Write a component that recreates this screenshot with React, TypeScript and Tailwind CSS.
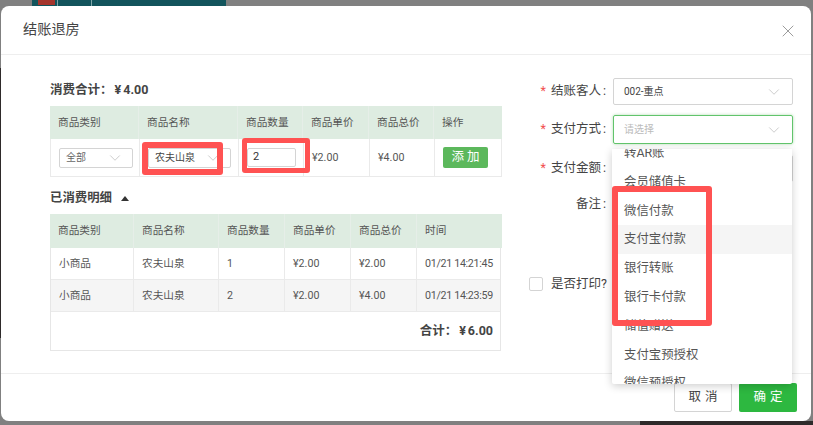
import React from 'react';
import { ChevronDown, X } from 'lucide-react';

const cjk = { fontFamily: 'Roboto, "Noto Sans CJK SC", sans-serif' };

const headCols1 = 'grid grid-cols-[89px_99px_65px_66px_65px_68px]';
const bodyCols1 = 'grid grid-cols-[89px_99px_65px_66px_65px_66px]';
const headCols2 = 'grid grid-cols-[84px_85px_66px_66px_66px_85px]';
const bodyCols2 = 'grid grid-cols-[83px_85px_66px_66px_66px_83px]';

const HeadCell = ({ children }: { children: React.ReactNode }) => (
  <div className="flex items-center border-r border-[#e6eee8] pl-2 text-[10.67px] text-[#555] last:border-r-0">{children}</div>
);

const Cell = ({ children }: { children?: React.ReactNode }) => (
  <div className="flex items-center border-r border-[#eaeaea] pl-2 text-[10.67px] text-[#555] last:border-r-0">{children}</div>
);

const SelectBox = ({ children, className }: { children: React.ReactNode; className: string }) => (
  <div className={`flex items-center justify-between rounded-[2px] border border-[#d4d4d4] bg-white ${className}`}>
    {children}
  </div>
);

const Chevron = () => <ChevronDown className="h-[18px] w-[18px] text-[#bbb]" strokeWidth={1} />;

const FormRow = ({ label, children }: { label: string; children?: React.ReactNode }) => (
  <div className="flex items-center">
    <div className="w-[84px] pr-[7px] text-right text-[12.5px] text-[#444]">
      <span className="mr-[5px] text-[#f25050]">*</span>
      {label}
      <span className="ml-[2px]">:</span>
    </div>
    {children}
  </div>
);

const Money = ({ label, value }: { label: string; value: string }) => (
  <span className="flex items-center text-[12.5px] font-bold text-[#444]">
    {label}：
    <span className="ml-[2px] mr-[2px]">¥</span>
    {value}
  </span>
);

const rows = [
  { qty: '1', price: '¥2.00', total: '¥2.00', time: '01/21 14:21:45', bg: 'bg-white' },
  { qty: '2', price: '¥2.00', total: '¥4.00', time: '01/21 14:23:59', bg: 'bg-[#f5f5f5]' },
];

const payItems = ['转AR账', '会员储值卡', '微信付款', '支付宝付款', '银行转账', '银行卡付款', '储值赠送', '支付宝预授权', '微信预授权'];

export default function App() {
  return (
    <div className="relative h-[425px] w-[813px] overflow-hidden bg-[#808080] pl-px pt-[6px]" style={cjk}>
      {/* what shows behind the dialog */}
      <div className="absolute left-[32px] top-0 h-[6px] w-[194px] bg-[#12545c]" />
      <div className="absolute left-[38px] top-0 h-[5px] w-[17px] bg-[#a5352c]" />
      <div className="absolute left-[57px] top-0 h-[6px] w-[35px] border-x border-[#7fa5a8]" />
      <div className="absolute bottom-0 left-[640px] h-[4px] w-[173px] bg-[#2e2a2a]" />
      <div className="absolute left-0 top-[68px] h-[270px] w-px bg-[#2e2a2a]" />

      <div className="relative flex h-[415px] w-[810px] flex-col rounded-[8px] bg-white">
        <div className="flex h-[49px] shrink-0 items-center justify-between border-b border-[#eeeeee] pl-[22px] pr-[13px]">
          <span className="text-[14.2px] text-[#444]">结账退房</span>
          <X className="mt-[2px] h-[20px] w-[20px] text-[#888]" strokeWidth={1} />
        </div>

        <div className="flex h-[318px] shrink-0">
          <div className="ml-[49px] w-[452px] shrink-0 pt-[24px]">
            <div className="h-[27px] pt-[2px] leading-[17px]">
              <Money label="消费合计" value="4.00" />
            </div>
            <div className={`${headCols1} h-[33px] bg-[#deece1]`}>
              {['商品类别', '商品名称', '商品数量', '商品单价', '商品总价', '操作'].map((h) => (
                <HeadCell key={h}>{h}</HeadCell>
              ))}
            </div>
            <div className={`${bodyCols1} h-[38px] border-x border-b border-[#eaeaea]`}>
              <Cell>
                <SelectBox className="h-[20px] w-[74px] pl-[6px] pr-[8px] text-[10px] text-[#666]">
                  全部
                  <Chevron />
                </SelectBox>
              </Cell>
              <Cell>
                <SelectBox className="h-[20px] w-[83px] shrink-0 pl-[6px] pr-[8px] text-[10px] text-[#444]">
                  农夫山泉
                  <Chevron />
                </SelectBox>
              </Cell>
              <Cell>
                <div className="flex h-[19px] w-[49px] items-center rounded-[2px] border border-[#d4d4d4] pl-[5px] text-[11px] text-[#333]">2</div>
              </Cell>
              <Cell>¥2.00</Cell>
              <Cell>¥4.00</Cell>
              <Cell>
                <div className="flex h-[21px] w-[45px] items-center justify-center rounded-[2px] bg-[#5cb85c] pl-[3px] text-[12.5px] tracking-[3px] text-white">添加</div>
              </Cell>
            </div>

            <div className="flex h-[37px] items-center gap-[9px] pt-[6px] text-[12.4px] font-bold text-[#444]">
              已消费明细
              <span className="h-0 w-0 border-x-[4.5px] border-b-[5px] border-x-transparent border-b-[#333]" />
            </div>

            <div className={`${headCols2} h-[34px] bg-[#deece1]`}>
              {['商品类别', '商品名称', '商品数量', '商品单价', '商品总价', '时间'].map((h) => (
                <HeadCell key={h}>{h}</HeadCell>
              ))}
            </div>
            <div className="w-[451px] border-x border-b border-[#e6e6e6]">
              {rows.map((r) => (
                <div key={r.time} className={`${bodyCols2} h-[32px] border-b border-[#eaeaea] ${r.bg}`}>
                  <Cell>小商品</Cell>
                  <Cell>农夫山泉</Cell>
                  <Cell>{r.qty}</Cell>
                  <Cell>{r.price}</Cell>
                  <Cell>{r.total}</Cell>
                  <Cell>
                    <span className="tracking-[-0.3px]">{r.time}</span>
                  </Cell>
                </div>
              ))}
              <div className="flex h-[38px] items-center justify-end pr-[7px]">
                <Money label="合计" value="6.00" />
              </div>
            </div>
          </div>

          <div className="ml-[27px] flex w-[264px] shrink-0 flex-col pt-[23px]">
            <FormRow label="结账客人">
              <SelectBox className="h-[27px] w-[180px] pl-[10px] pr-[9px] text-[10px] text-[#444]">
                002-重点
                <Chevron />
              </SelectBox>
            </FormRow>
            <div className="mt-[10px]">
              <FormRow label="支付方式">
                <div className="flex h-[29px] w-[180px] items-center justify-between rounded-[2px] border border-[#62c46c] pl-[10px] pr-[9px] text-[10px] text-[#bbb] shadow-[0_0_3px_rgba(92,184,92,0.5)]">
                  请选择
                  <Chevron />
                </div>
              </FormRow>
            </div>
            <div className="mt-[11px]">
              <FormRow label="支付金额">
                <div className="h-[27px] w-[180px] rounded-[2px] border border-[#d4d4d4]" />
              </FormRow>
            </div>
            <div className="mt-[9px] flex h-[27px] w-[77px] items-center justify-end text-[12.5px] text-[#444]">
              备注<span className="ml-[2px]">:</span>
            </div>
            <div className="mt-[57px] flex items-center gap-[8px] text-[12.5px] text-[#444]">
              <span className="h-[14px] w-[14px] rounded-[2px] border border-[#d4d4d4] bg-white" />
              是否打印?
            </div>
          </div>
        </div>

        <div className="flex flex-1 items-start justify-end gap-[7px] border-t border-[#eeeeee] pr-[14px] pt-[9px]">
          <div className="flex h-[29px] w-[58px] items-center justify-center rounded-[2px] border border-[#d4d4d4] bg-white pl-[4px] text-[12.5px] tracking-[4px] text-[#444]">取消</div>
          <div className="flex h-[29px] w-[58px] items-center justify-center rounded-[2px] bg-[#2db840] pl-[4px] text-[12.5px] tracking-[4px] text-white">确定</div>
        </div>

        {/* open dropdown of the payment select */}
        <div className="absolute left-[611px] top-[143px] h-[235px] w-[180px] overflow-hidden rounded-b-[2px] bg-white shadow-[0_2px_8px_rgba(0,0,0,0.2)]">
          <div className="-mt-[10px]">
            {payItems.map((item) => (
              <div
                key={item}
                className={`flex h-[28.8px] items-center pl-[12px] text-[12.4px] text-[#555] ${item === '支付宝付款' ? 'bg-[#f5f5f5]' : ''}`}
              >
                {item}
              </div>
            ))}
          </div>
        </div>

        {/* red annotation boxes */}
        <div className="absolute left-[141px] top-[136px] h-[33px] w-[81px] rounded-[3px] border-[6px] border-[#ff5252]" />
        <div className="absolute left-[241px] top-[132px] h-[35px] w-[68px] rounded-[3px] border-[5px] border-[#ff5252]" />
        <div className="absolute left-[611px] top-[180px] h-[140px] w-[100px] rounded-[3px] border-[6px] border-[#ff5252]" />
      </div>
    </div>
  );
}
